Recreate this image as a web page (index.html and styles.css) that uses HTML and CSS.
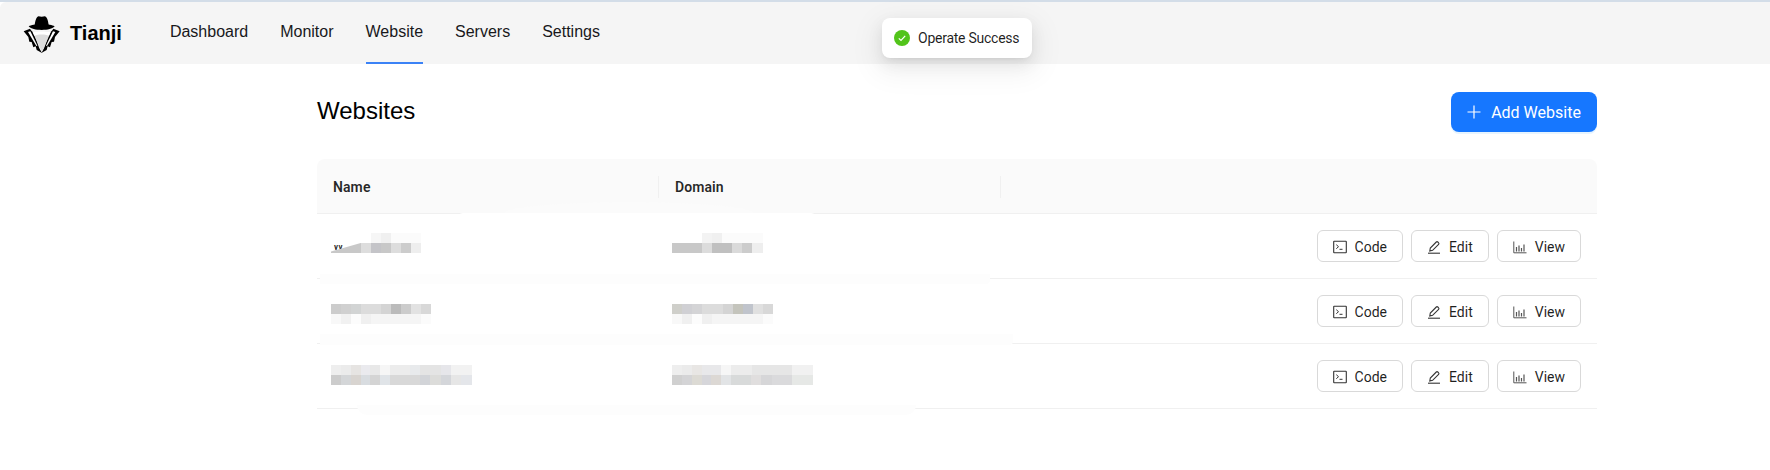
FILE: index.html
```html
<!DOCTYPE html>
<html lang="en">
<head>
<meta charset="utf-8">
<title>Tianji</title>
<link rel="stylesheet" href="styles.css">
</head>
<body>
<div class="topline"></div>
<header class="navbar">
  <div class="brand">
    <svg class="logo" viewBox="0 0 135 135" aria-hidden="true">
      <path fill="#000" d="M44 42C46 28 50 16 56 16C60 18 70 18 74 16C80 16 84 28 86 42Z"/>
      <path fill="#000" d="M26 46C34 42 44 40 65 40C86 40 96 42 104 46C96 54 84 57 65 57C46 57 34 54 26 46Z"/>
      <path fill="#000" d="M11 61L30 53C34 60 38 62 41 66L58 112L66 126L50 117L47 106L40 109L35 93L28 92L25 78Z"/>
      <path fill="#000" d="M119 61L100 53C96 60 92 62 89 66L72 112L64 126L80 117L83 106L90 109L95 93L102 92L105 78Z"/>
      <path fill="#fff" d="M24 63L31 61L52 104L49 105Z"/>
      <path fill="#fff" d="M106 63L99 61L78 104L81 105Z"/>
      <path fill="#dcdcdc" d="M38 64C50 60 80 60 92 64L66 122Z"/>
      <path fill="#fff" d="M38 64C50 60 80 60 92 64L87 74C74 69 56 69 43 74Z"/>
    </svg>
    <span class="brand-name">Tianji</span>
  </div>
  <nav class="nav">
    <a class="nav-item">Dashboard</a>
    <a class="nav-item">Monitor</a>
    <a class="nav-item active">Website</a>
    <a class="nav-item">Servers</a>
    <a class="nav-item">Settings</a>
  </nav>
</header>

<div class="toast">
  <svg class="toast-icon" viewBox="0 0 16 16" aria-hidden="true">
    <circle cx="8" cy="8" r="8" fill="#52c41a"/>
    <path d="M4.800 8.300l2.200 2.200 4.200-4.600" fill="none" stroke="#fff" stroke-width="1.200"/>
  </svg>
  <span>Operate Success</span>
</div>

<main class="page">
  <div class="page-head">
    <h1 class="title">Websites</h1>
    <button class="primary-btn">
      <svg class="plus" viewBox="0 0 14 14" aria-hidden="true"><path d="M7 .5v13M.5 7h13" fill="none" stroke="#fff" stroke-width="1.200"/></svg>
      <span>Add Website</span>
    </button>
  </div>

  <section class="table">
    <div class="row head">
      <div class="cell name-col"><span class="th">Name</span></div>
      <div class="cell domain-col"><span class="th">Domain</span></div>
      <div class="cell action-col"></div>
    </div>

    <div class="row body-row">
      <div class="cell name-col"><span class="peek">w</span><div class="blur blur-a"></div></div>
      <div class="cell domain-col"><div class="blur blur-b"></div></div>
      <div class="cell action-col">
        <button class="btn"><svg class="ico" viewBox="0 0 14 14"><rect x=".7" y="1.200" width="12.600" height="11.600" rx=".5" fill="none" stroke="#333" stroke-width="1.100"/><path d="M3.300 4.700l2.200 2-2.200 2M6.500 9.300h3" fill="none" stroke="#333" stroke-width="1"/></svg><span>Code</span></button>
        <button class="btn"><svg class="ico" viewBox="0 0 14 14"><path d="M1 13.200h12" stroke="#333" stroke-width="1.100" fill="none"/><path d="M2.800 11l.5-3 6-6c.5-.5 1-.5 1.500 0l.8.800c.5.500.5 1 0 1.500l-6 6z" fill="none" stroke="#333" stroke-width="1.100"/></svg><span>Edit</span></button>
        <button class="btn"><svg class="ico" viewBox="0 0 14 14"><path d="M.8 1.500v11.300h12.700" fill="none" stroke="#555" stroke-width="1"/><path d="M3.500 7v4.500M6 5.500v6M8.500 8v3.500M11 4.500v7" fill="none" stroke="#555" stroke-width="1.200"/></svg><span>View</span></button>
      </div>
    </div>

    <div class="row body-row">
      <div class="cell name-col"><div class="blur blur-c"></div></div>
      <div class="cell domain-col"><div class="blur blur-d"></div></div>
      <div class="cell action-col">
        <button class="btn"><svg class="ico" viewBox="0 0 14 14"><rect x=".7" y="1.200" width="12.600" height="11.600" rx=".5" fill="none" stroke="#333" stroke-width="1.100"/><path d="M3.300 4.700l2.200 2-2.200 2M6.500 9.300h3" fill="none" stroke="#333" stroke-width="1"/></svg><span>Code</span></button>
        <button class="btn"><svg class="ico" viewBox="0 0 14 14"><path d="M1 13.200h12" stroke="#333" stroke-width="1.100" fill="none"/><path d="M2.800 11l.5-3 6-6c.5-.5 1-.5 1.500 0l.8.800c.5.500.5 1 0 1.500l-6 6z" fill="none" stroke="#333" stroke-width="1.100"/></svg><span>Edit</span></button>
        <button class="btn"><svg class="ico" viewBox="0 0 14 14"><path d="M.8 1.500v11.300h12.700" fill="none" stroke="#555" stroke-width="1"/><path d="M3.500 7v4.500M6 5.500v6M8.500 8v3.500M11 4.500v7" fill="none" stroke="#555" stroke-width="1.200"/></svg><span>View</span></button>
      </div>
    </div>

    <div class="row body-row">
      <div class="cell name-col"><div class="blur blur-e"></div></div>
      <div class="cell domain-col"><div class="blur blur-f"></div></div>
      <div class="cell action-col">
        <button class="btn"><svg class="ico" viewBox="0 0 14 14"><rect x=".7" y="1.200" width="12.600" height="11.600" rx=".5" fill="none" stroke="#333" stroke-width="1.100"/><path d="M3.300 4.700l2.200 2-2.200 2M6.500 9.300h3" fill="none" stroke="#333" stroke-width="1"/></svg><span>Code</span></button>
        <button class="btn"><svg class="ico" viewBox="0 0 14 14"><path d="M1 13.200h12" stroke="#333" stroke-width="1.100" fill="none"/><path d="M2.800 11l.5-3 6-6c.5-.5 1-.5 1.500 0l.8.800c.5.500.5 1 0 1.500l-6 6z" fill="none" stroke="#333" stroke-width="1.100"/></svg><span>Edit</span></button>
        <button class="btn"><svg class="ico" viewBox="0 0 14 14"><path d="M.8 1.500v11.300h12.700" fill="none" stroke="#555" stroke-width="1"/><path d="M3.500 7v4.500M6 5.500v6M8.500 8v3.500M11 4.500v7" fill="none" stroke="#555" stroke-width="1.200"/></svg><span>View</span></button>
      </div>
    </div>
    <div class="wash wash-0"></div>
    <div class="wash wash-1"></div>
    <div class="wash wash-2"></div>
    <div class="wash wash-3"></div>
    <div class="wash wash-4"></div>
  </section>
</main>
</body>
</html>
```
FILE: styles.css
```css
* { box-sizing: border-box; }
html, body { margin: 0; padding: 0; }
body {
  width: 1770px;
  height: 470px;
  overflow: hidden;
  background: #fff;
  font-family: Roboto, "Noto Sans", sans-serif;
  position: relative;
}
.topline { height: 2px; background: #d3dde8; }
.navbar {
  height: 62px;
  background: #f5f5f5;
  border-top-left-radius: 6px;
  display: flex;
  align-items: stretch;
  padding-left: 20px;
}
.brand { display: flex; align-items: center; gap: 5px; }
.logo { width: 45px; height: 45px; }
.brand-name {
  font-family: "Liberation Sans", sans-serif;
  font-weight: 700;
  font-size: 20px;
  color: #000;
}
.nav { display: flex; margin-left: 48px; gap: 32px; }
.nav-item {
  font-family: "Liberation Sans", sans-serif;
  font-size: 16px;
  color: #18181b;
  display: flex;
  align-items: center;
  border-bottom: 2px solid transparent;
}
.nav-item.active { border-bottom-color: #3b82f6; }

.toast {
  position: absolute;
  top: 18px;
  left: 882px;
  height: 40px;
  width: 150px;
  display: flex;
  align-items: center;
  gap: 8px;
  padding-left: 12px;
  background: #fff;
  border-radius: 8px;
  box-shadow: 0 6px 16px rgba(0,0,0,.08), 0 3px 6px -4px rgba(0,0,0,.12), 0 9px 28px 8px rgba(0,0,0,.05);
  font-size: 14px;
  letter-spacing: -.25px;
  color: rgba(0,0,0,.88);
  z-index: 5;
}
.toast-icon { width: 16px; height: 16px; flex: none; }

.page { width: 1280px; margin-left: 317px; }
.page-head {
  display: flex;
  justify-content: space-between;
  align-items: center;
  padding-top: 28px;
  margin-bottom: 27px;
}
.title {
  margin: -2px 0 0;
  font-family: "Liberation Sans", sans-serif;
  font-weight: 400;
  font-size: 24px;
  color: #000;
}
.primary-btn {
  height: 40px;
  width: 146px;
  border: 0;
  border-radius: 8px;
  background: #1677ff;
  color: #fff;
  font-family: inherit;
  font-size: 16px;
  display: flex;
  align-items: center;
  justify-content: center;
  gap: 10px;
  box-shadow: 0 2px 0 rgba(5,145,255,.1);
}
.plus { width: 14px; height: 14px; }

.table { position: relative; }
.row { display: flex; border-bottom: 1px solid #f0f0f0; }
.head {
  height: 55px;
  background: #fafafa;
  border-radius: 8px 8px 0 0;
}
.head .cell { padding-top: 2px; }
.body-row { height: 65px; }
.cell { display: flex; align-items: center; padding: 0 16px; position: relative; }
.name-col { width: 342px; }
.domain-col { width: 342px; }
.action-col { flex: 1; justify-content: flex-end; gap: 8px; }
.head .cell + .cell::before {
  content: "";
  position: absolute;
  left: -1px;
  top: 17px;
  height: 22px;
  width: 1px;
  background: #f0f0f0;
}
.th { font-size: 14px; font-weight: 600; letter-spacing: .1px; color: rgba(0,0,0,.85); }

.btn {
  height: 32px;
  padding: 2px 15px 0;
  display: flex;
  align-items: center;
  gap: 8px;
  background: #fff;
  border: 1px solid #d9d9d9;
  border-radius: 6px;
  font-family: inherit;
  font-size: 14px;
  color: rgba(0,0,0,.88);
}
.ico { width: 14px; height: 14px; }

.blur { height: 20px; position: relative; z-index: 2; margin-left: -2px; }
.domain-col .blur { margin-left: -3px; }
.body-row:nth-child(2) .blur { margin-bottom: 6px; }
.body-row:nth-child(3) .blur { margin-top: 6px; }
.body-row:nth-child(4) .blur { margin-bottom: 2px; }
.peek {
  position: absolute;
  left: 16px;
  top: 21px;
  font-size: 14px;
  line-height: 20px;
  color: rgba(0,0,0,.88);
  clip-path: inset(50% 0 0 0);
  z-index: 1;
}
.blur-a { width: 90px; clip-path: polygon(0 100%, 0 92%, 33% 50%, 40% 30%, 44% 0, 100% 0, 100% 100%); background:
  linear-gradient(90deg, #fff 0 44.4%, #f6f6f6 44.4% 55.5%, #f0f0f0 55.5% 66.6%, #fbfbfb 66.6% 100%) top/100% 50% no-repeat,
  linear-gradient(90deg, #c8c8c8 0 33.3%, #ddd 33.3% 44.4%, #c4c4c8 44.4% 55.5%, #c8c8c8 55.5% 66.6%, #ddd 66.6% 77.7%, #ccc 77.7% 88.8%, #eee 88.8% 100%) bottom/100% 50% no-repeat; }
.blur-b { width: 91px; background:
  linear-gradient(90deg, #fff 0 33%, #f3f3f3 33% 44%, #f0f0f0 44% 55%, #fbfbfb 55% 100%) top/100% 50% no-repeat,
  linear-gradient(90deg, #c8c8c8 0 33%, #dcdcdc 33% 44%, #c0c0c0 44% 66%, #dadada 66% 77%, #ccc 77% 88%, #eee 88% 100%) bottom/100% 50% no-repeat; }
.blur-c { width: 100px; background:
  linear-gradient(90deg, #ccc 0 10%, #d0d0d0 10% 20%, #d2d4d4 20% 30%, #dcdcdc 30% 50%, #d4d4d4 50% 60%, #bbb 60% 70%, #ccc 70% 80%, #e2e2e2 80% 90%, #d8d8d8 90% 100%) top/100% 50% no-repeat,
  linear-gradient(90deg, #f8f8f8 0 10%, #f1f1f1 10% 20%, #fcfcfc 20% 30%, #f0f0f0 30% 40%, #f5f5f5 40% 90%, #fbfbfb 90% 100%) bottom/100% 50% no-repeat; }
.blur-d { width: 101px; background:
  linear-gradient(90deg, #cfcfca 0 10%, #d0d0d4 10% 20%, #d4d4d6 20% 30%, #dcdcdc 30% 50%, #d4d4d4 50% 60%, #c4c4bc 60% 70%, #c0c4cc 70% 80%, #e0e0e0 80% 90%, #d8d8d8 90% 100%) top/100% 50% no-repeat,
  linear-gradient(90deg, #f8f8f8 0 10%, #f0f0f0 10% 20%, #fcfcfc 20% 30%, #f0f0f0 30% 40%, #f5f5f5 40% 90%, #fbfbfb 90% 100%) bottom/100% 50% no-repeat; }
.blur-e { width: 141px; background:
  linear-gradient(90deg, #eee 0 7%, #ebebeb 7% 14%, #e6e4e2 14% 21%, #eaeaee 21% 28%, #e8e8e8 28% 35%, #f6f6f6 35% 42%, #ececec 42% 56%, #e8eaec 56% 63%, #e4e4e4 63% 78%, #e6e6ea 78% 85%, #f2f2f2 85% 100%) top/100% 50% no-repeat,
  linear-gradient(90deg, #ccc 0 7%, #d4d6d8 7% 14%, #d8d4d0 14% 21%, #d8dce0 21% 28%, #d4d4d4 28% 35%, #e0e4e8 35% 42%, #d8d8d8 42% 63%, #d2d4d8 63% 70%, #dcdcda 70% 78%, #d4d6da 78% 85%, #e6e6e6 85% 92%, #e4e6ea 92% 100%) bottom/100% 50% no-repeat; }
.blur-f { width: 141px; background:
  linear-gradient(90deg, #eee 0 7%, #ebebeb 7% 14%, #e8e6e4 14% 21%, #e8e8ea 21% 35%, #f6f6f6 35% 42%, #ececec 42% 57%, #e6e6e6 57% 85%, #f1f1f1 85% 100%) top/100% 50% no-repeat,
  linear-gradient(90deg, #d0d0d0 0 7%, #d4d4d6 7% 14%, #dcdad4 14% 21%, #d6d6da 21% 28%, #dcd8d4 28% 35%, #e2e4e6 35% 42%, #d8dada 42% 56%, #e0dede 56% 63%, #d6d6d8 63% 71%, #dadadc 71% 85%, #e6e8e6 85% 100%) bottom/100% 50% no-repeat; }

.wash { position: absolute; background: #fdfdfd; z-index: 1; }
.wash-0 { left: 186px; top: 43px; width: 252px; height: 12px; border-radius: 50% 50% 0 0 / 100% 100% 0 0; background: #fbfbfb; }
.wash-1 { left: 140px; top: 54px; width: 360px; height: 10px; border-radius: 6px 6px 0 0; background: #fff; }
.wash-2 { left: 3px; top: 115px; width: 670px; height: 10px; border-radius: 0 0 4px 0; }
.wash-3 { left: 3px; top: 175px; width: 693px; height: 11px; border-radius: 0 0 4px 0; }
.wash-4 { left: 40px; top: 246px; width: 559px; height: 10px; border-radius: 0 0 14px 14px; }
```
